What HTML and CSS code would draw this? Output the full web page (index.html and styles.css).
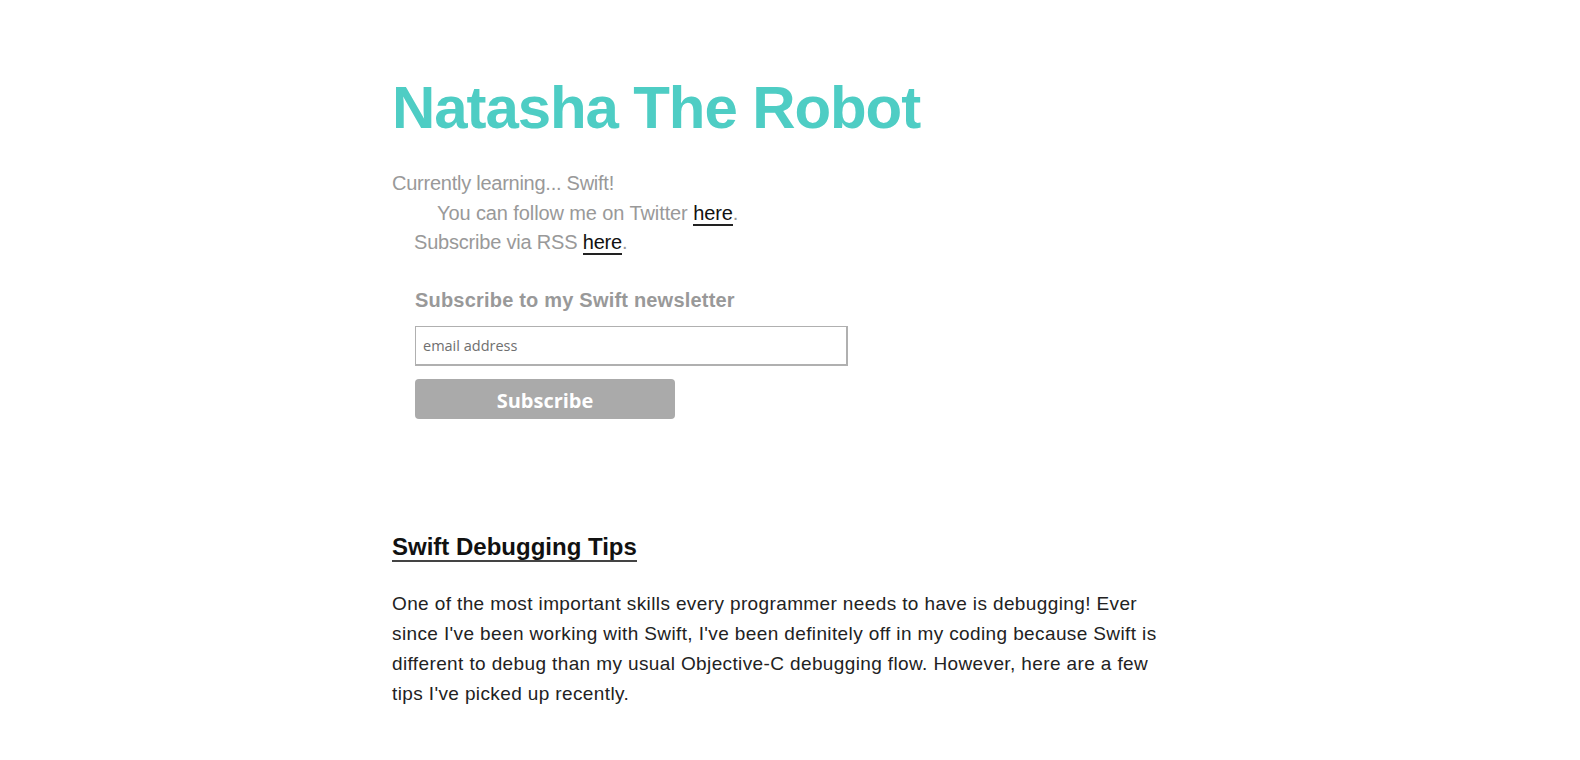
FILE: index.html
```html
<!DOCTYPE html>
<html lang="en">
<head>
<meta charset="utf-8">
<title>Natasha The Robot</title>
<link rel="stylesheet" href="styles.css">
</head>
<body>
<div class="page">
  <header class="masthead">
    <h1 class="site-title">Natasha The Robot</h1>
    <div class="tagline">
      <p class="line line-first">Currently learning... Swift!</p>
      <p class="line line-twitter">You can follow me on Twitter <a class="inline-link" href="#">here</a>.</p>
      <p class="line line-rss">Subscribe via RSS <a class="inline-link" href="#">here</a>.</p>
    </div>
    <form class="newsletter">
      <h3 class="newsletter-title">Subscribe to my Swift newsletter</h3>
      <input class="email-input" type="email" placeholder="email address">
      <button class="subscribe-btn" type="button">Subscribe</button>
    </form>
  </header>
  <article class="post">
    <h2 class="post-title"><a class="post-link" href="#">Swift Debugging Tips</a></h2>
    <p class="post-body">One of the most important skills every programmer needs to have is debugging! Ever since I've been working with Swift, I've been definitely off in my coding because Swift is different to debug than my usual Objective-C debugging flow. However, here are a few tips I've picked up recently.</p>
  </article>
</div>
</body>
</html>
```

FILE: styles.css
```css
html, body {
  margin: 0;
  padding: 0;
  background: #ffffff;
}

body {
  font-family: "Liberation Sans", Arial, sans-serif;
  color: #222222;
}

.page {
  width: 796px;
  margin: 0 auto;
  padding-top: 78px;
}

.site-title {
  margin: 0;
  font-size: 60px;
  line-height: 60px;
  font-weight: bold;
  letter-spacing: -1.1px;
  color: #4ecdc4;
}

.tagline {
  margin-top: 31px;
}

.line {
  margin: 0;
  font-size: 20px;
  line-height: 29.5px;
  letter-spacing: -0.1px;
  color: #999999;
}

.line-first {
  letter-spacing: -0.25px;
}

.line-twitter {
  padding-left: 45px;
}

.line-rss {
  padding-left: 22px;
  letter-spacing: -0.2px;
}

.inline-link {
  color: #111111;
  text-decoration: none;
  border-bottom: 2px solid #222222;
}

.newsletter {
  margin: 30.5px 0 0 23px;
  display: flex;
  flex-direction: column;
  align-items: flex-start;
}

.newsletter-title {
  margin: 0;
  font-size: 20px;
  line-height: 24px;
  font-weight: bold;
  letter-spacing: 0.2px;
  color: #999999;
}

.email-input {
  box-sizing: border-box;
  margin: 14px 0 0 0;
  width: 433px;
  height: 40px;
  padding: 0 7px;
  border: 2px solid #b0b0b0;
  border-top-width: 1px;
  border-left-width: 1px;
  border-radius: 0;
  font-family: "Open Sans", sans-serif;
  font-size: 14.5px;
  color: #333333;
  outline: none;
}

.email-input::placeholder {
  color: #6f6f6f;
}

.subscribe-btn {
  box-sizing: border-box;
  margin-top: 13px;
  width: 260px;
  height: 40px;
  padding: 4px 0 0 0;
  border: none;
  border-radius: 4px;
  background: #aaaaaa;
  color: #ffffff;
  font-family: "Open Sans", sans-serif;
  font-weight: bold;
  font-size: 20px;
  line-height: 36px;
  text-align: center;
}

.post {
  margin-top: 113px;
}

.post-title {
  margin: 0;
  font-size: 24px;
  line-height: 30px;
  font-weight: bold;
}

.post-link {
  color: #111111;
  text-decoration: none;
  border-bottom: 2px solid #444444;
}

.post-body {
  margin: 27px 0 0 0;
  width: 780px;
  font-size: 19px;
  line-height: 30px;
  letter-spacing: 0.38px;
  color: #222222;
}
```
